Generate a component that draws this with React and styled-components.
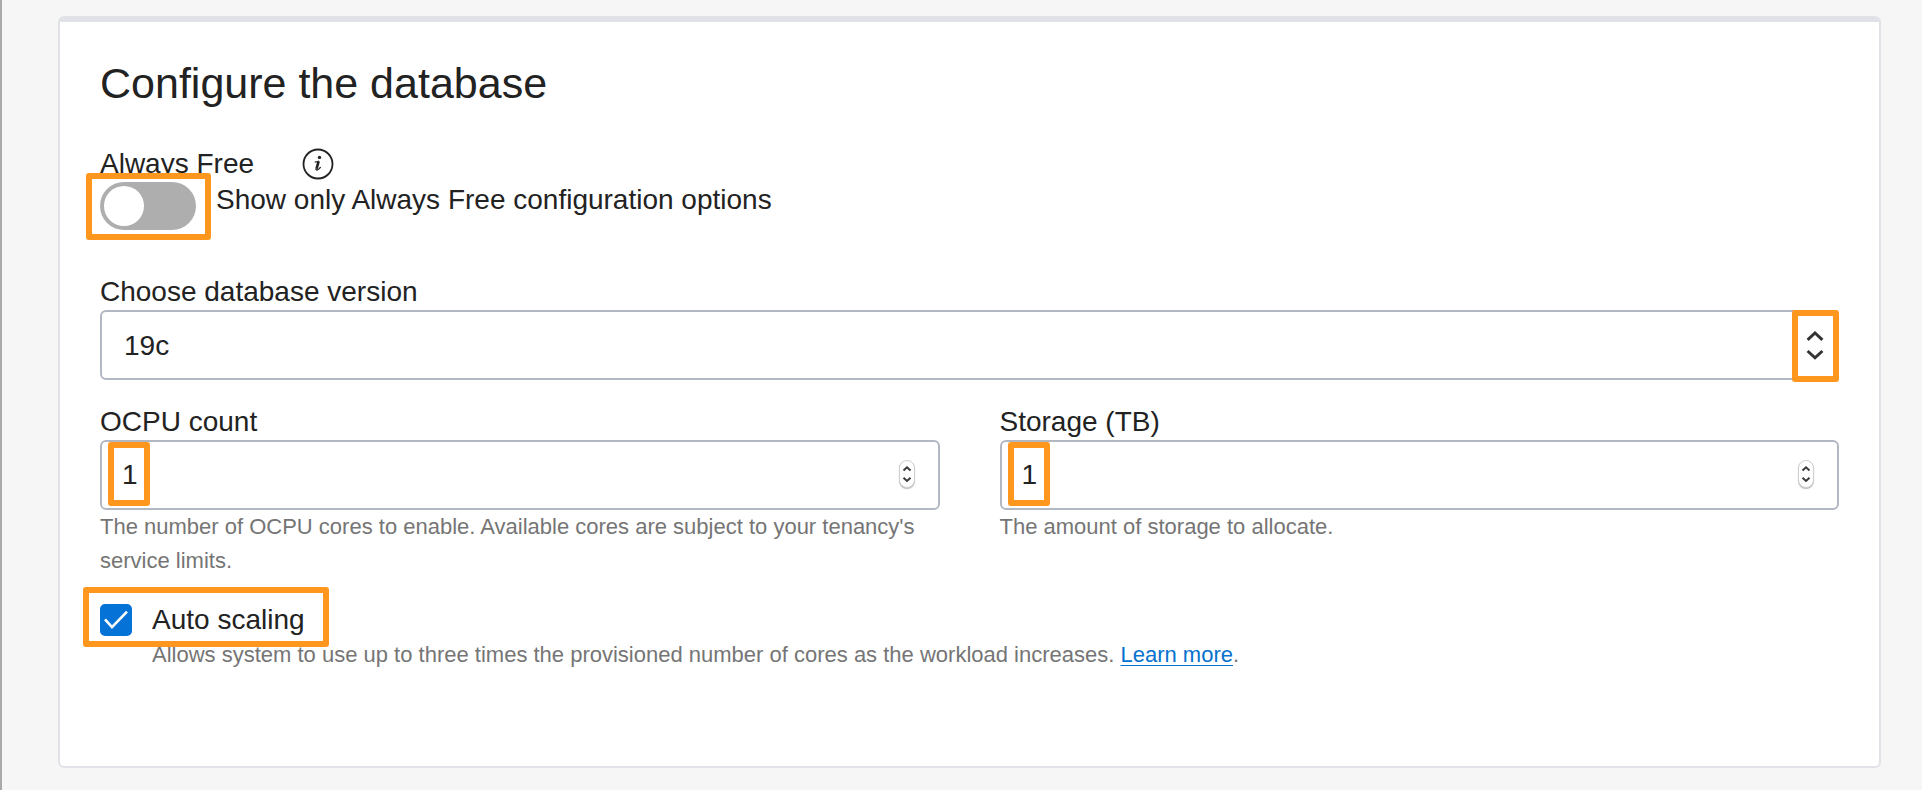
import React, { useState } from "react";
import styled, { createGlobalStyle, css } from "styled-components";

const GlobalStyle = createGlobalStyle`
  *, *::before, *::after { box-sizing: border-box; }
  body {
    margin: 0;
    background: #f6f6f6;
    color: #222;
    font-family: "Liberation Sans", Helvetica, Arial, sans-serif;
  }
`;

const Page = styled.main`
  min-height: 100vh;
  padding: 16px 41px 22px 56px;
  border-left: 2px solid #a9a9a9;
`;

const Card = styled.form`
  padding: 34px 40px 94px;
  background: #fff;
  border: 2px solid #e1e2e7;
  border-top-width: 6px;
  border-radius: 6px;
`;

const Title = styled.h1`
  margin: 0 0 36px;
  font-size: 43px;
  font-weight: 400;
  line-height: 54px;
`;

const labelText = css`
  font-size: 28px;
  line-height: 36px;
`;

const Label = styled.label`
  display: block;
  ${labelText}
`;

const LabelRow = styled.div`
  display: flex;
  align-items: center;
  gap: 48px;
`;

const InfoButton = styled.button`
  display: flex;
  padding: 0;
  border: 0;
  background: none;
  color: inherit;
`;

const ToggleRow = styled.div`
  display: flex;
  gap: 20px;
  margin-bottom: 44px;
`;

const Anchor = styled.div`
  position: relative;
  display: flex;
`;

const Highlight = styled.span`
  position: absolute;
  inset: ${(p) => p.$inset};
  width: ${(p) => p.$width || "auto"};
  border: 6px solid #ff961e;
  border-radius: 3px;
  pointer-events: none;
  z-index: 1;
`;

const Toggle = styled.input`
  appearance: none;
  width: 96px;
  height: 48px;
  margin: 0;
  padding: 4px;
  border-radius: 24px;
  background: ${(p) => (p.checked ? "#0572d8" : "#aeaeae")};

  &::before {
    content: "";
    display: block;
    width: 40px;
    height: 40px;
    margin-left: ${(p) => (p.checked ? "48px" : "0")};
    border-radius: 50%;
    background: #fff;
  }
`;

const Field = styled.div`
  min-width: 0;
`;

const controlBox = css`
  width: 100%;
  height: 70px;
  margin: 0;
  padding: 0 22px;
  border: 2px solid #b2b8c3;
  border-radius: 6px;
  background: #fff;
  color: inherit;
  font-family: inherit;
  font-size: 28px;
`;

const Select = styled.select`
  appearance: none;
  ${controlBox}
`;

const NumberInput = styled.input`
  appearance: textfield;
  ${controlBox}
  padding: 0 20px;

  &::-webkit-inner-spin-button,
  &::-webkit-outer-spin-button {
    appearance: none;
    margin: 0;
  }
`;

const SelectArrows = styled.svg`
  position: absolute;
  top: 20px;
  right: 14px;
  pointer-events: none;
`;

const Spinner = styled.span`
  position: absolute;
  top: 20px;
  right: 25px;
  display: flex;
  border: 1px solid #cfcfcf;
  border-radius: 8px;
  background: #fff;
  box-shadow: 0 1px 1px #bbb;
`;

const Columns = styled.div`
  display: grid;
  grid-template-columns: 1fr 1fr;
  gap: 60px;
  margin: 24px 0;
`;

const Hint = styled.p`
  margin: 0;
  color: #757575;
  font-size: 22px;
  line-height: 34px;
`;

const CheckLine = styled.div`
  position: relative;
  display: flex;
  align-items: center;
  gap: 20px;
  width: fit-content;
`;

const CheckBox = styled.span`
  position: relative;
  display: flex;

  svg {
    position: absolute;
    inset: 0;
    pointer-events: none;
  }
`;

const CheckInput = styled.input`
  appearance: none;
  width: 32px;
  height: 32px;
  margin: 0;
  border: 2px solid ${(p) => (p.checked ? "#0572d8" : "#b2b8c3")};
  border-radius: 5px;
  background: ${(p) => (p.checked ? "#0572d8" : "#fff")};
`;

const CheckHint = styled(Hint)`
  padding-left: 52px;
`;

const Link = styled.a`
  color: #0572ce;
  text-decoration: underline;
  text-decoration-thickness: 1px;
  text-underline-offset: 3px;
`;

function NumberField({ id, label, hint }) {
  return (
    <Field>
      <Label htmlFor={id}>{label}</Label>
      <Anchor>
        <NumberInput id={id} type="number" min="1" defaultValue="1" />
        <Highlight $inset="2px auto 4px 8px" $width="42px" />
        <Spinner aria-hidden="true">
          <svg width="14" height="26" viewBox="0 0 14 26" fill="none" stroke="#3a3a3a" strokeWidth="2">
            <path d="M3.5 9.5 7 6.3l3.5 3.2M3.5 16.8 7 20l3.5-3.2" />
          </svg>
        </Spinner>
      </Anchor>
      <Hint>{hint}</Hint>
    </Field>
  );
}

export default function App() {
  const [free, setFree] = useState(false);
  const [scaling, setScaling] = useState(true);

  return (
    <>
      <GlobalStyle />
      <Page>
        <Card>
          <Title>Configure the database</Title>

          <LabelRow>
            <Label as="span">Always Free</Label>
            <InfoButton type="button" aria-label="About Always Free">
              <svg width="32" height="32" viewBox="0 0 32 32" fill="none" stroke="#222">
                <circle cx="16" cy="16" r="14.5" strokeWidth="1.8" />
                <path d="M12.8 14.2c1.8-.2 3-.6 4.4-1.2" strokeWidth="1.2" />
                <path d="M16.6 13.4 14.6 20.6" strokeWidth="2.6" />
                <path d="M14 20.4c-.3 2.4 2.6 2 4.6-1.4" strokeWidth="1.4" />
                <circle cx="17.5" cy="9.4" r="1.7" fill="#222" stroke="none" />
              </svg>
            </InfoButton>
          </LabelRow>
          <ToggleRow>
            <Anchor>
              <Toggle
                id="always-free"
                type="checkbox"
                role="switch"
                checked={free}
                onChange={(e) => setFree(e.target.checked)}
              />
              <Highlight $inset="-9px -15px -10px -14px" />
            </Anchor>
            <Label htmlFor="always-free">Show only Always Free configuration options</Label>
          </ToggleRow>

          <Field>
            <Label htmlFor="version">Choose database version</Label>
            <Anchor>
              <Select id="version" defaultValue="19c">
                <option>19c</option>
              </Select>
              <SelectArrows width="20" height="32" viewBox="0 0 20 32" fill="none" stroke="#333" strokeWidth="3">
                <path d="M2.6 9.8 10 3l7.4 6.8M2.6 21 10 27.8l7.4-6.8" />
              </SelectArrows>
              <Highlight $inset="0 0 -2px auto" $width="47px" />
            </Anchor>
          </Field>

          <Columns>
            <NumberField
              id="ocpu"
              label="OCPU count"
              hint="The number of OCPU cores to enable. Available cores are subject to your tenancy's service limits."
            />
            <NumberField id="storage" label="Storage (TB)" hint="The amount of storage to allocate." />
          </Columns>

          <CheckLine>
            <CheckBox>
              <CheckInput
                id="scaling"
                type="checkbox"
                checked={scaling}
                onChange={(e) => setScaling(e.target.checked)}
              />
              {scaling && (
                <svg width="32" height="32" viewBox="0 0 32 32" fill="none" stroke="#fff" strokeWidth="2.6">
                  <path d="M5 15.4 12 23.2 27 7.6" />
                </svg>
              )}
            </CheckBox>
            <Label htmlFor="scaling">Auto scaling</Label>
            <Highlight $inset="-15px -24px -9px -17px" />
          </CheckLine>
          <CheckHint>
            Allows system to use up to three times the provisioned number of cores as the workload increases.{" "}
            <Link href="#learn-more">Learn more</Link>.
          </CheckHint>
        </Card>
      </Page>
    </>
  );
}
